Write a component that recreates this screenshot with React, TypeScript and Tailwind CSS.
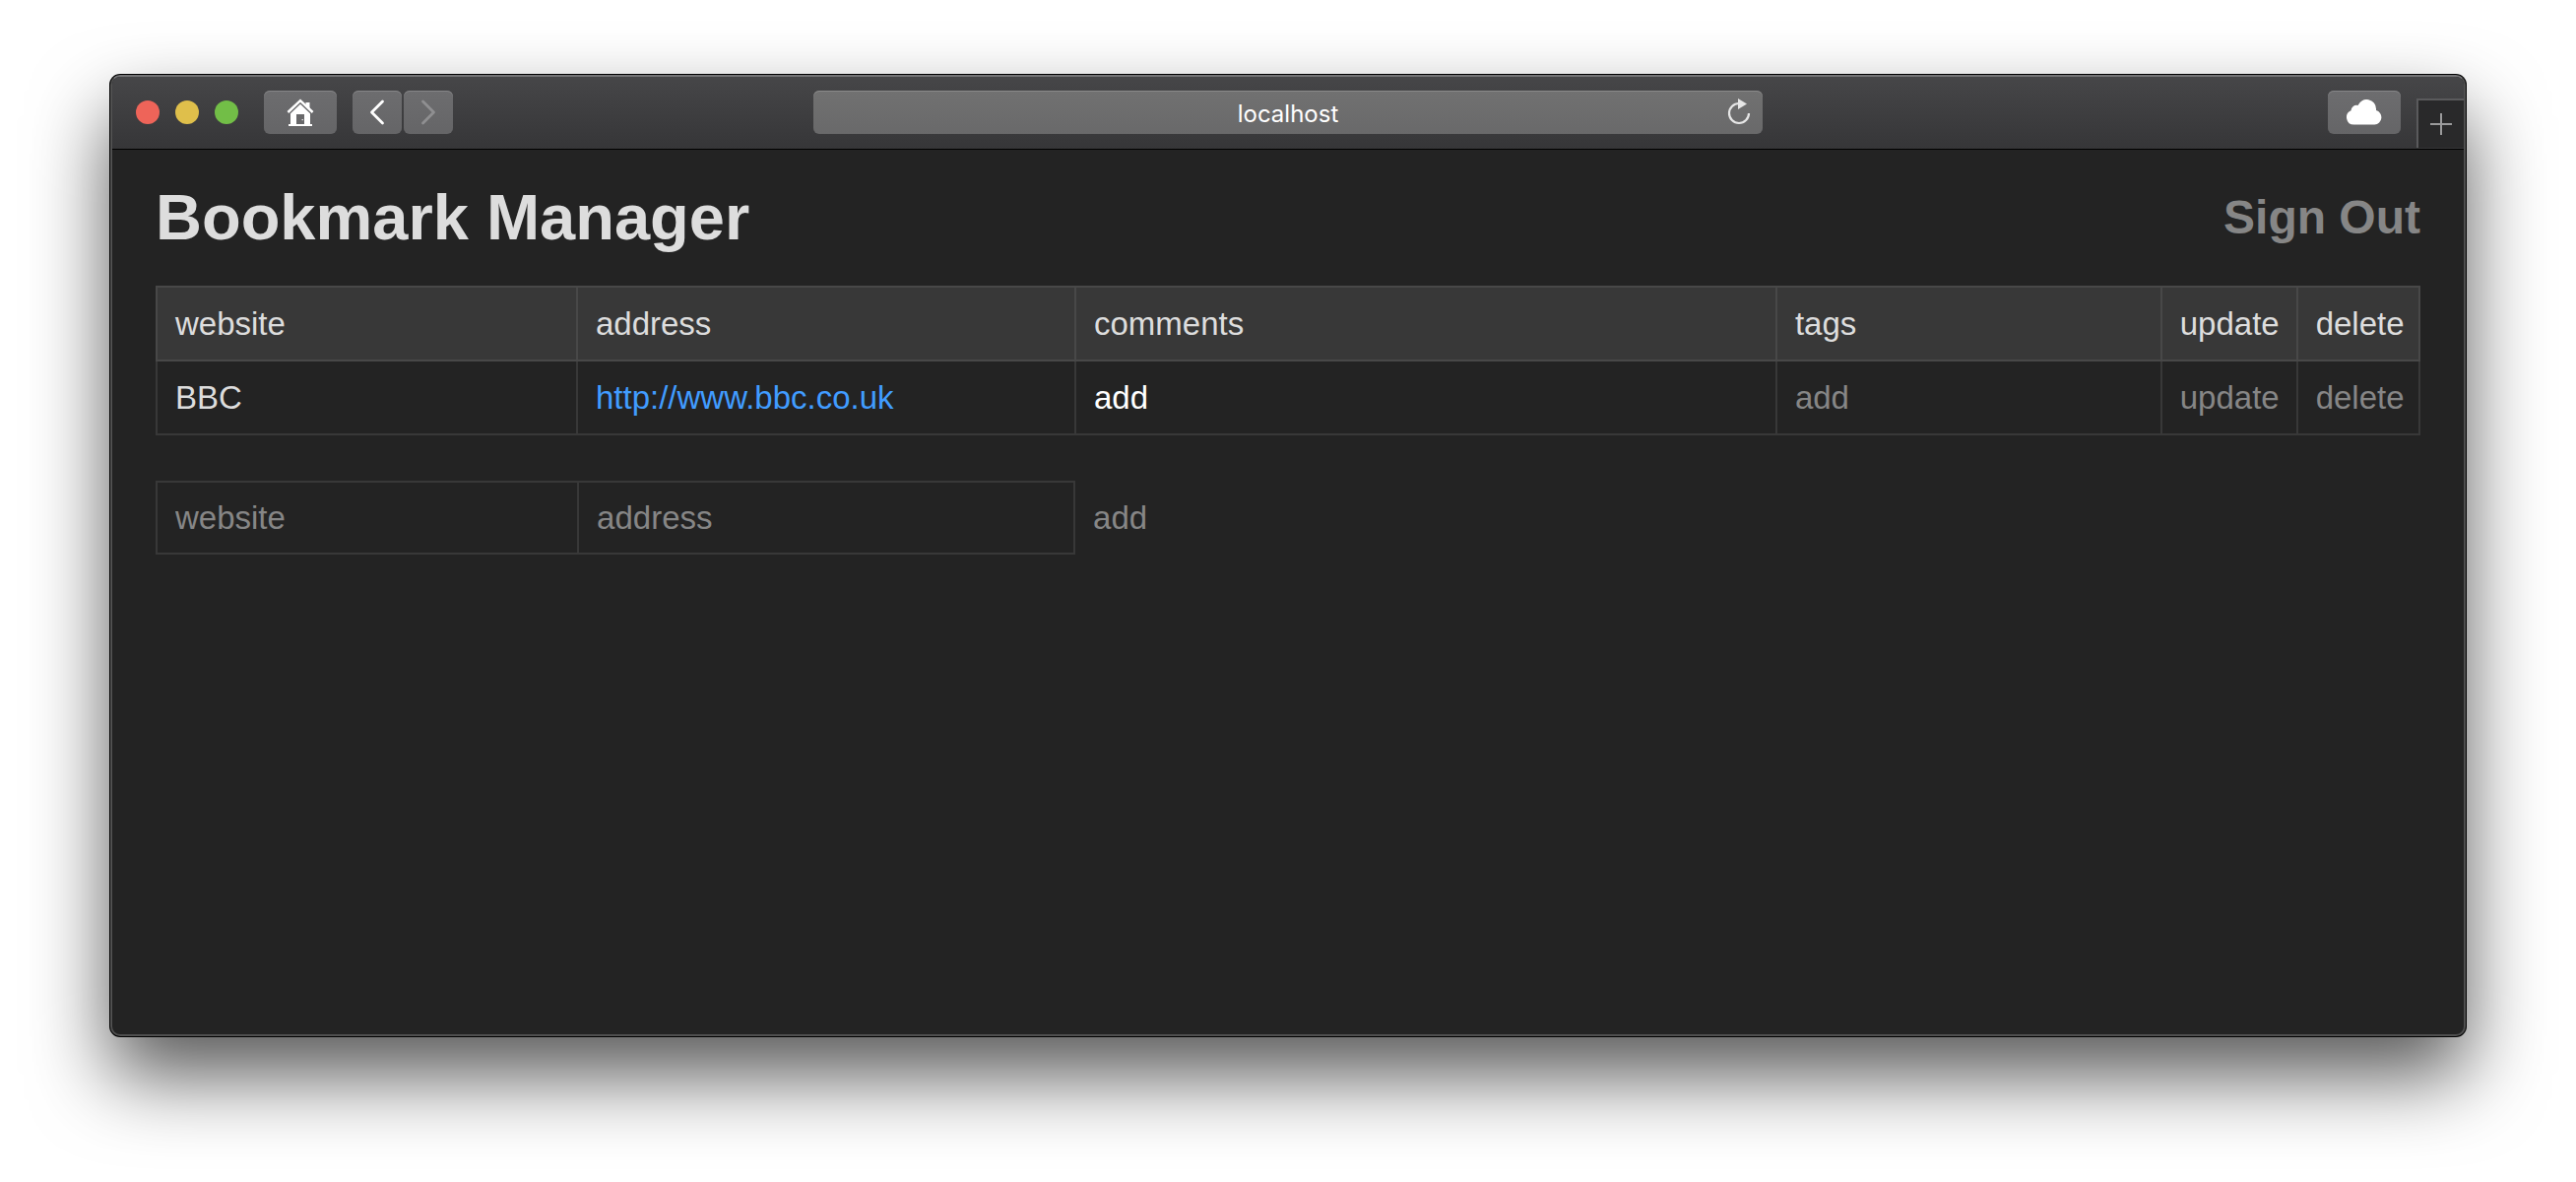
import type { ReactNode } from "react";

type Bookmark = { website: string; address: string };

const bookmarks: Bookmark[] = [{ website: "BBC", address: "http://www.bbc.co.uk" }];

const cell = "border-2 pl-[18px] pr-4 pt-[19px] pb-[18px] text-left font-normal leading-9";

function HomeIcon() {
  return (
    <svg width="28" height="28" viewBox="0 0 28 28" aria-hidden="true">
      <path d="M19.5 4h4v8l-4-3.800z" fill="#fff" />
      <path d="M1.400 14 14 2.200 26.600 14" fill="none" stroke="#fff" strokeWidth="2.500" />
      <path
        d="M14 5.800 24 15.200V26h2v2H2v-2h2V15.200zM10 16v10h8V16z"
        fill="#fff"
        fillRule="evenodd"
      />
      <rect x="15.600" y="21" width="1.200" height="1.200" fill="#fff" />
    </svg>
  );
}

function Chevron({ direction }: { direction: "back" | "forward" }) {
  return (
    <svg width="16" height="28" viewBox="0 0 16 28" fill="none" stroke="currentColor" strokeWidth="2.800" strokeLinecap="round" strokeLinejoin="round" aria-hidden="true">
      <path d={direction === "back" ? "M13.5 3 2.5 14l11 11" : "M2.5 3l11 11-11 11"} />
    </svg>
  );
}

function CloudIcon() {
  return (
    <svg width="36" height="26" viewBox="0 0 36 26" fill="#fff" aria-hidden="true">
      <path d="M7.500 25.500A7.400 7.400 0 0 1 4.500 11.300 5.600 5.600 0 0 1 11.500 6 9.600 9.600 0 0 1 30 9.800v1.200a7.400 7.400 0 0 1-1.500 14.500z" />
    </svg>
  );
}

function ReloadIcon() {
  return (
    <svg width="24" height="30" viewBox="0 0 24 30" aria-hidden="true">
      <path d="M22 16A10 10 0 1 1 12 6" fill="none" stroke="#e6e6e6" strokeWidth="2.200" />
      <path d="M11 1v11l9-5.500z" fill="#e6e6e6" />
    </svg>
  );
}

function ToolButton({ label, wide, children }: { label: string; wide?: boolean; children: ReactNode }) {
  return (
    <button
      type="button"
      aria-label={label}
      className={`${wide ? "w-[74px]" : "w-[50px]"} flex h-11 items-center justify-center rounded-md bg-linear-to-b from-[#6d6d6f] to-[#656567] text-white shadow-[inset_0_1px_0_#858587]`}
    >
      {children}
    </button>
  );
}

function Toolbar() {
  return (
    <div className="grid h-[74px] grid-cols-[1fr_40.4%_1fr] border-b border-black bg-linear-to-b from-[#464648] to-[#363638] pb-px">
      <div className="flex items-center pl-6">
        <div className="flex gap-4">
          <button type="button" aria-label="Close" className="size-6 rounded-full bg-[#ee6459]" />
          <button type="button" aria-label="Minimise" className="size-6 rounded-full bg-[#dfbf4b]" />
          <button type="button" aria-label="Zoom" className="size-6 rounded-full bg-[#72be47]" />
        </div>
        <div className="ml-[26px] flex gap-4">
          <ToolButton label="Home" wide>
            <HomeIcon />
          </ToolButton>
          <div className="flex gap-0.5">
            <ToolButton label="Back">
              <Chevron direction="back" />
            </ToolButton>
            <ToolButton label="Forward">
              <span className="text-[#8f8f91]">
                <Chevron direction="forward" />
              </span>
            </ToolButton>
          </div>
        </div>
      </div>
      <div className="flex items-center">
        <div className="flex h-11 w-full items-center rounded-md bg-linear-to-b from-[#717171] to-[#69696a] pr-3 pl-9 shadow-[inset_0_1px_0_#8a8a8a]">
          <input
            type="text"
            aria-label="Location"
            defaultValue="localhost"
            className="min-w-0 flex-1 bg-transparent pt-1 text-center font-[Inter,sans-serif] text-2xl leading-8 text-white outline-none"
          />
          <button type="button" aria-label="Reload">
            <ReloadIcon />
          </button>
        </div>
      </div>
      <div className="flex items-center justify-end gap-4">
        <ToolButton label="iCloud Tabs" wide>
          <CloudIcon />
        </ToolButton>
        <button
          type="button"
          aria-label="New tab"
          className="flex h-[50px] w-12 items-center justify-center self-end border-t-2 border-l-2 border-[#5a5a5c] bg-[#29292a]"
        >
          <svg width="22" height="22" viewBox="0 0 22 22" stroke="#9a9a9b" strokeWidth="2" aria-hidden="true">
            <path d="M11 0v22M0 11h22" />
          </svg>
        </button>
      </div>
    </div>
  );
}

function BookmarkTable() {
  return (
    <table className="w-full table-fixed border-collapse">
      <colgroup>
        <col className="w-[18.58%]" />
        <col className="w-[22.02%]" />
        <col className="w-[30.98%]" />
        <col className="w-[17.01%]" />
        <col className="w-[6%]" />
        <col />
      </colgroup>
      <thead className="bg-[#383838]">
        <tr>
          {["website", "address", "comments", "tags", "update", "delete"].map((name) => (
            <th key={name} scope="col" className={`${cell} border-[#484848]`}>
              {name}
            </th>
          ))}
        </tr>
      </thead>
      <tbody>
        {bookmarks.map((bookmark) => (
          <tr key={bookmark.address}>
            <td className={`${cell} border-[#383838]`}>{bookmark.website}</td>
            <td className={`${cell} border-[#383838]`}>
              <a href={bookmark.address} className="text-[#419cff]">
                {bookmark.address}
              </a>
            </td>
            <td className={`${cell} border-[#383838]`}>
              <a href="#comments" className="text-white">add</a>
            </td>
            <td className={`${cell} border-[#383838]`}>
              <a href="#tags" className="text-[#868686]">add</a>
            </td>
            <td className={`${cell} border-[#383838]`}>
              <a href="#update" className="text-[#868686]">update</a>
            </td>
            <td className={`${cell} border-[#383838]`}>
              <a href="#delete" className="text-[#868686]">delete</a>
            </td>
          </tr>
        ))}
      </tbody>
    </table>
  );
}

function AddBookmark() {
  const field =
    "h-[75px] border-2 border-[#383838] bg-transparent px-[18px] leading-9 text-[#dddddd] outline-none placeholder:text-[#868686] placeholder:opacity-100";
  return (
    <form className="mt-[46px] flex items-center" onSubmit={(event) => event.preventDefault()}>
      <input type="text" aria-label="website" placeholder="website" className={`${field} w-[18.7%]`} />
      <input type="text" aria-label="address" placeholder="address" className={`${field} -ml-0.5 w-[22%]`} />
      <button type="submit" className="ml-[18px] leading-9 text-[#868686]">
        add
      </button>
    </form>
  );
}

export default function App() {
  return (
    <div className="flex min-h-screen flex-col bg-white px-28 pt-[76px] pb-[148px] font-['Liberation_Sans',Arial,sans-serif]">
      <div className="flex flex-1 flex-col overflow-hidden rounded-[10px] border-2 border-[#4f4f4f] border-t-[#737375] bg-[#232323] shadow-[0_0_0_1px_#000,0_40px_80px_rgba(0,0,0,0.66)]">
        <Toolbar />
        <main className="flex-1 px-11 pb-11 text-[33px] text-[#dddddd]">
          <header className="flex items-center justify-between py-8">
            <h1 className="text-[65px] leading-[74px] font-bold">Bookmark Manager</h1>
            <a href="#sign-out" className="text-5xl font-bold text-[#868686]">
              Sign Out
            </a>
          </header>
          <BookmarkTable />
          <AddBookmark />
        </main>
      </div>
    </div>
  );
}
